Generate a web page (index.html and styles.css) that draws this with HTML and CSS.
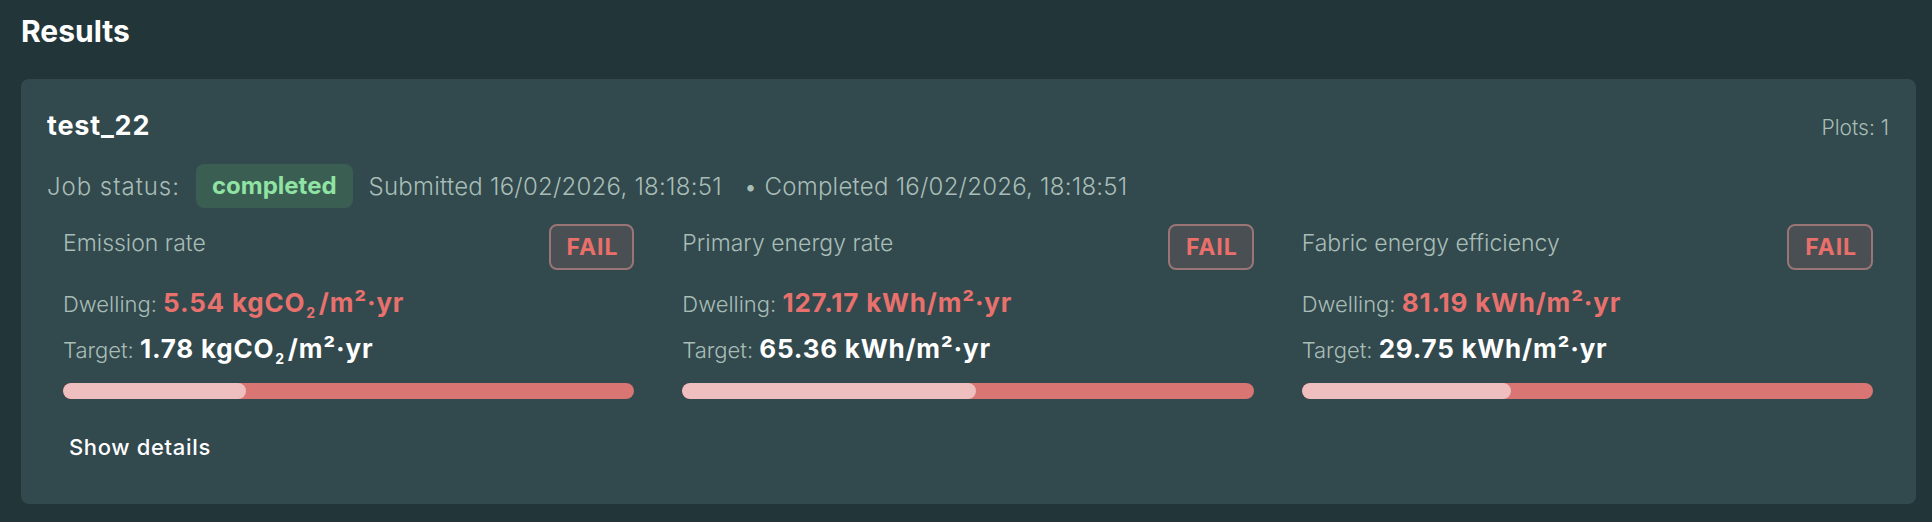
FILE: index.html
```html
<!DOCTYPE html>
<html lang="en">
<head>
    <meta charset="UTF-8">
    <meta name="viewport" content="width=device-width, initial-scale=1.0">
    <title>Results</title>
    <link rel="stylesheet" href="styles.css">
</head>
<body>
    <h1>Results</h1>

    <div class="job-card">
        <div class="job-header">
            <span class="job-name">test_22</span>
            <span class="plots">Plots: 1</span>
        </div>

        <div class="job-status">
            <span class="status-label">Job status:</span>
            <span class="status-badge">completed</span>
            <span class="timestamp">Submitted 16/02/2026, 18:18:51</span>
            <span class="timestamp">&bull; Completed 16/02/2026, 18:18:51</span>
        </div>

        <div class="metrics">
            <div class="metric">
                <div class="metric-head">
                    <span class="metric-title">Emission rate</span>
                    <span class="fail-badge">FAIL</span>
                </div>
                <div class="reading">Dwelling: <b class="value bad">5.54 kgCO<sub>2</sub>/m²·yr</b></div>
                <div class="reading">Target: <b class="value">1.78 kgCO<sub>2</sub>/m²·yr</b></div>
                <div class="bar"><div class="bar-fill" style="width: 32.1%"></div></div>
            </div>

            <div class="metric">
                <div class="metric-head">
                    <span class="metric-title">Primary energy rate</span>
                    <span class="fail-badge">FAIL</span>
                </div>
                <div class="reading">Dwelling: <b class="value bad">127.17 kWh/m²·yr</b></div>
                <div class="reading">Target: <b class="value">65.36 kWh/m²·yr</b></div>
                <div class="bar"><div class="bar-fill" style="width: 51.4%"></div></div>
            </div>

            <div class="metric">
                <div class="metric-head">
                    <span class="metric-title">Fabric energy efficiency</span>
                    <span class="fail-badge">FAIL</span>
                </div>
                <div class="reading">Dwelling: <b class="value bad">81.19 kWh/m²·yr</b></div>
                <div class="reading">Target: <b class="value">29.75 kWh/m²·yr</b></div>
                <div class="bar"><div class="bar-fill" style="width: 36.6%"></div></div>
            </div>
        </div>

        <button class="details-button">Show details</button>
    </div>
</body>
</html>
```

FILE: styles.css
```css
body {
    font-family: 'Inter', 'Liberation Sans', sans-serif;
    background-color: #22363a;
    color: #ffffff;
    margin: 0;
    padding: 13px 16px 0 21px;
}

h1 {
    font-size: 30px;
    line-height: 36px;
    font-weight: 700;
    margin: 0 0 30px;
}

.job-card {
    background-color: #32494e;
    border-radius: 8px;
    padding: 32px 27px 45px 26px;
}

.job-header {
    display: flex;
    justify-content: space-between;
    align-items: baseline;
    line-height: 30px;
}

.job-name {
    font-size: 27px;
    font-weight: 700;
    letter-spacing: 0.03em;
}

.plots {
    font-size: 21px;
    font-weight: 300;
    color: #a8bdb6;
}

.job-status {
    display: flex;
    align-items: center;
    margin-top: 21px;
    font-size: 24px;
    font-weight: 300;
    color: #a8bdb6;
}

.status-label {
    margin-right: 16px;
    letter-spacing: 0.04em;
}

.status-badge {
    background-color: #3b5e52;
    color: #8fe3a3;
    font-weight: 700;
    border-radius: 8px;
    height: 44px;
    line-height: 44px;
    padding: 0 16px;
    margin-right: 16px;
}

.timestamp {
    margin-right: 22px;
    letter-spacing: 0.01em;
}

.metrics {
    display: grid;
    grid-template-columns: repeat(3, 1fr);
    gap: 16px;
    margin-top: 16px;
}

.metric {
    padding: 0 16px;
}

.metric-head {
    display: flex;
    justify-content: space-between;
    align-items: flex-start;
    margin-bottom: 15px;
}

.metric-title {
    font-size: 23px;
    line-height: 28px;
    font-weight: 300;
    color: #a8bdb6;
    padding-top: 5px;
}

.fail-badge {
    box-sizing: border-box;
    height: 46px;
    line-height: 42px;
    padding: 0 14px 0 16px;
    border: 2px solid #9b7576;
    border-radius: 8px;
    background-color: #4a4f53;
    color: #ea6f6b;
    font-size: 23px;
    font-weight: 700;
    letter-spacing: 0.04em;
}

.reading {
    font-size: 22px;
    line-height: 35px;
    font-weight: 300;
    color: #a8bdb6;
    margin-bottom: 9px;
}

.value {
    font-size: 26px;
    font-weight: 700;
    color: #ffffff;
    letter-spacing: 0.03em;
}

.value.bad {
    color: #e8716d;
}

.value sub {
    font-size: 14px;
    line-height: 0;
    margin: 0 3px 0 1px;
}

.bar {
    height: 16px;
    border-radius: 8px;
    background-color: #d97572;
    margin-top: 15px;
    overflow: hidden;
}

.bar-fill {
    height: 100%;
    border-radius: 8px;
    background-color: #efbfbf;
}

.details-button {
    background: none;
    border: none;
    padding: 0;
    margin: 36px 0 0 22px;
    font-family: inherit;
    font-size: 22px;
    line-height: 24px;
    font-weight: 500;
    color: #ffffff;
    letter-spacing: 0.03em;
    cursor: pointer;
}
```
